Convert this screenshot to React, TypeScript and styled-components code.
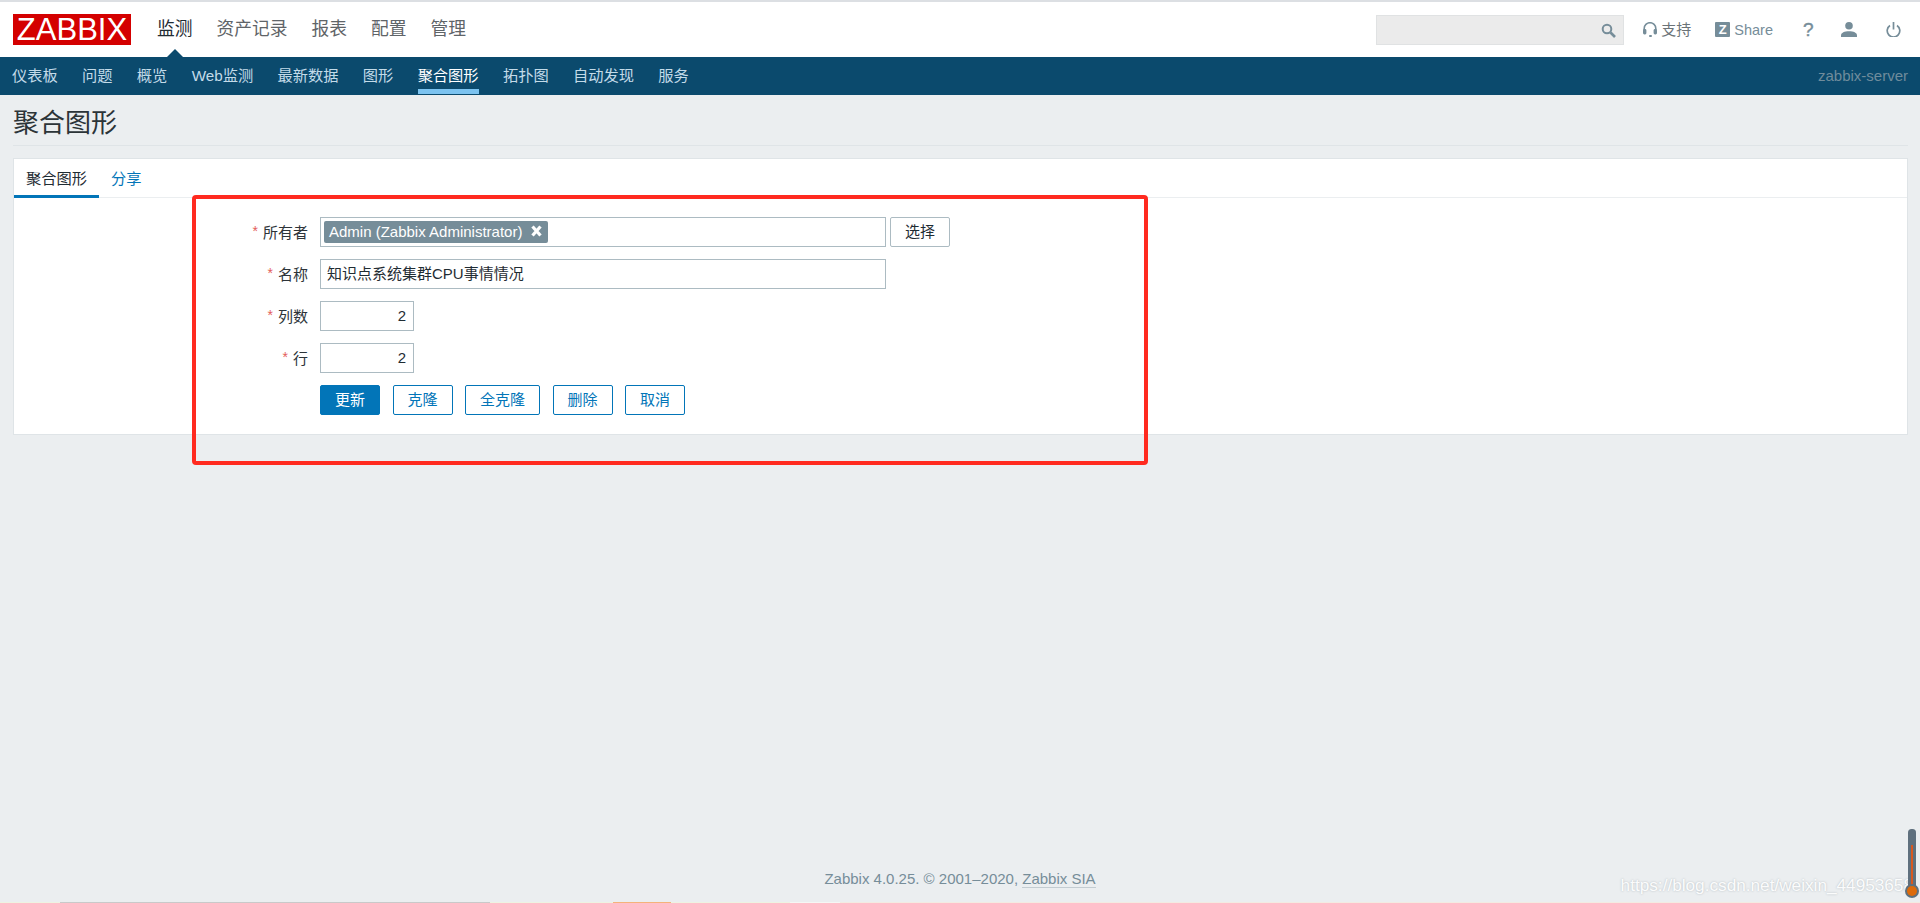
import React from 'react'
import styled, { createGlobalStyle } from 'styled-components'

const FONT = `"Liberation Sans", "Noto Sans CJK SC", sans-serif`

const GlobalStyle = createGlobalStyle`
  html, body {
    margin: 0;
    padding: 0;
    background: #ebeef0;
    font-family: ${FONT};
    overflow: hidden;
  }
  * {
    box-sizing: border-box;
  }
`

const Page = styled.div`
  position: relative;
  height: 903px;
  display: flex;
  flex-direction: column;
  overflow: hidden;
`

const Header = styled.header`
  height: 57px;
  flex: none;
  display: flex;
  align-items: center;
  padding: 0 19px 0 13px;
  background: #fff;
  border-top: 2px solid #dcdfe3;
`

const Logo = styled.div`
  width: 118px;
  height: 31px;
  flex: none;
  background: #d40000;
  color: #fff;
  font-size: 31px;
  line-height: 31px;
  text-align: center;
`

const MainNav = styled.nav`
  display: flex;
  gap: 24px;
  margin-left: 26px;
  margin-top: -1px;
`

const MainLink = styled.a<{ $active?: boolean }>`
  position: relative;
  font-size: 17.75px;
  line-height: 24px;
  color: ${(p) => (p.$active ? '#1f2c33' : '#5f6468')};

  ${(p) =>
    p.$active &&
    `&::after {
      content: '';
      position: absolute;
      left: 50%;
      bottom: -18px;
      margin-left: -10px;
      border-left: 10px solid transparent;
      border-right: 10px solid transparent;
      border-bottom: 10px solid #0b4a6d;
    }`}
`

const HeaderRight = styled.div`
  margin-left: auto;
  display: flex;
  align-items: center;
`

const SearchBox = styled.div`
  position: relative;
  width: 248px;
  height: 30px;
  background: #ebebeb;
  border: 1px solid #e0e2e3;
`

const SearchIconSlot = styled.span`
  position: absolute;
  right: 7px;
  top: 7px;
  display: flex;
`

const HelpLinks = styled.div`
  display: flex;
  align-items: center;
  gap: 24px;
  margin-left: 19px;
`

const HelpLink = styled.a`
  display: flex;
  align-items: center;
  gap: 4px;
  line-height: 18px;
`

const HelpLabel = styled.span<{ $cjk?: boolean }>`
  font-size: ${(p) => (p.$cjk ? '15px' : '14.5px')};
  color: ${(p) => (p.$cjk ? '#6b7378' : '#768d99')};
`

const ZBadge = styled.span`
  width: 15px;
  height: 15px;
  background: #768d99;
  border-radius: 1px;
  color: #fff;
  font-size: 13px;
  font-weight: 700;
  line-height: 15px;
  text-align: center;
`

const IconLinks = styled.div`
  display: flex;
  align-items: center;
  gap: 29px;
  margin-left: 30px;
`

const QuestionMark = styled.a`
  width: 9px;
  font-size: 19px;
  font-weight: 400;
  line-height: 18px;
  color: #768d99;
  -webkit-text-stroke: 0.4px #768d99;
`

const SubNav = styled.nav`
  height: 38px;
  flex: none;
  display: flex;
  gap: 24.3px;
  padding: 0 12px;
  background: #0b4a6d;
`

const SubLink = styled.a<{ $active?: boolean }>`
  height: 37px;
  padding-top: 7px;
  font-size: 15.25px;
  line-height: 24px;
  color: ${(p) => (p.$active ? '#fff' : '#c3dbe9')};
  border-bottom: 5px solid ${(p) => (p.$active ? '#7cc3f0' : 'transparent')};
`

const ServerName = styled.span`
  margin-left: auto;
  padding-top: 7px;
  font-size: 15px;
  line-height: 24px;
  color: #6f8c9c;
`

const Content = styled.main`
  flex: none;
  padding: 0 12px 0 13px;
`

const TitleBar = styled.div`
  height: 51px;
  display: flex;
  align-items: center;
  padding-top: 5px;
  border-bottom: 1px solid #dfe4e7;
`

const Title = styled.h1`
  margin: 0;
  font-size: 26px;
  font-weight: 400;
  line-height: 34px;
  color: #2c3438;
`

const Card = styled.section`
  margin-top: 12px;
  background: #fff;
  border: 1px solid #dfe4e7;
`

const Tabs = styled.div`
  display: flex;
  height: 39px;
  border-bottom: 1px solid #ebeef0;
`

const Tab = styled.a<{ $active?: boolean }>`
  height: 39px;
  padding: 8px 12px 0;
  font-size: 15.25px;
  line-height: 24px;
  color: ${(p) => (p.$active ? '#1f2c33' : '#0275b8')};
  border-bottom: 3px solid ${(p) => (p.$active ? '#0275b8' : 'transparent')};
`

const Form = styled.form`
  display: grid;
  grid-template-columns: 294px 1fr;
  column-gap: 12px;
  row-gap: 12px;
  padding: 19px 0;
`

const FieldLabel = styled.label`
  display: flex;
  justify-content: flex-end;
  align-items: center;
  gap: 5px;
  height: 30px;
  padding-bottom: 2px;
  font-size: 15px;
  color: #2d3439;
`

const Star = styled.span`
  color: #e3605c;
  font-size: 14px;
`

const FieldRow = styled.div`
  display: flex;
  gap: 4px;
`

const Input = styled.div<{ $narrow?: boolean }>`
  width: ${(p) => (p.$narrow ? '94px' : '566px')};
  height: 30px;
  padding: 0 7px 0 6px;
  border: 1px solid #acbbc2;
  font-size: 15px;
  line-height: 28px;
  color: #1f2c33;
  text-align: ${(p) => (p.$narrow ? 'right' : 'left')};
`

const MultiSelect = styled.div`
  width: 566px;
  height: 30px;
  padding: 3px;
  border: 1px solid #acbbc2;
`

const Tag = styled.span`
  display: inline-flex;
  align-items: center;
  gap: 9px;
  width: 224px;
  height: 22px;
  padding-left: 5px;
  background: #768d99;
  border-radius: 2px;
  color: #fff;
  font-size: 15px;
  line-height: 22px;
  white-space: nowrap;
`

const RemoveGlyph = styled.svg`
  margin-top: -3px;
`

const Button = styled.button<{ $variant?: 'primary' | 'outline' | 'plain' }>`
  height: 30px;
  padding: 0 14px;
  border-radius: 2px;
  font-family: ${FONT};
  font-size: 15px;
  line-height: 28px;
  border: 1px solid ${(p) => (p.$variant === 'plain' ? '#acbbc2' : '#0275b8')};
  background: ${(p) => (p.$variant === 'primary' ? '#0275b8' : '#fff')};
  color: ${(p) =>
    p.$variant === 'primary' ? '#fff' : p.$variant === 'plain' ? '#1f2c33' : '#0275b8'};
`

const Actions = styled.div`
  grid-column: 2;
  display: flex;
  gap: 12.5px;
`

const Footer = styled.footer`
  margin-top: auto;
  height: 33px;
  flex: none;
  text-align: center;
  font-size: 15px;
  line-height: 20px;
  color: #768d99;
`

const FooterLink = styled.a`
  border-bottom: 1px solid #c3ccd1;
`

const BottomStrip = styled.div`
  height: 1px;
  flex: none;
  display: flex;
`

const StripPart = styled.span<{ $w: number; $c: string }>`
  flex: ${(p) => (p.$w ? `0 0 ${p.$w}px` : '1')};
  background: ${(p) => p.$c};
`

/* red annotation drawn over the screenshot */
const Annotation = styled.div`
  position: absolute;
  left: 192px;
  top: 195px;
  width: 956px;
  height: 270px;
  border: 4px solid #ff2a1f;
  border-radius: 4px;
  pointer-events: none;
`

const Watermark = styled.span`
  position: absolute;
  right: 7px;
  bottom: 6px;
  font-size: 17.2px;
  line-height: 24px;
  color: rgba(255, 255, 255, 0.95);
  text-shadow: 0 0 2px rgba(170, 178, 184, 0.9);
  white-space: nowrap;
`

const Thermometer = styled.svg`
  position: absolute;
  right: 1px;
  bottom: 5px;
`

const SearchIcon = () => (
  <svg width="15" height="15" viewBox="0 0 15 15" fill="none" stroke="#768d99">
    <circle cx="6" cy="6" r="4.3" strokeWidth="2" />
    <path d="M9.5 9.5L14 14" strokeWidth="2.6" />
  </svg>
)

const HeadsetIcon = () => (
  <svg width="14" height="15" viewBox="0 0 14 15" fill="none">
    <path d="M1.2 9V6.5a5.8 5.8 0 0 1 11.6 0V9" stroke="#768d99" strokeWidth="1.6" />
    <rect x="0" y="7" width="3.4" height="5.5" rx="1.4" fill="#768d99" />
    <rect x="10.6" y="7" width="3.4" height="5.5" rx="1.4" fill="#768d99" />
    <rect x="6" y="13" width="3" height="2" rx="1" fill="#768d99" />
  </svg>
)

const UserIcon = () => (
  <svg width="16" height="15" viewBox="0 0 16 15" fill="#768d99">
    <circle cx="8" cy="3.8" r="3.8" />
    <path d="M0 15v-1.6C0 10.800 3.500 9.300 8 9.300s8 1.500 8 4.100V15z" />
  </svg>
)

const PowerIcon = () => (
  <svg width="15" height="15" viewBox="0 0 15 15" fill="none" stroke="#768d99" strokeWidth="1.7">
    <path d="M4 3.500a6.300 6.300 0 1 0 7 0" />
    <path d="M7.500 0v7.500" />
  </svg>
)

const RemoveIcon = () => (
  <RemoveGlyph width="11" height="12" viewBox="0 0 11 12" stroke="#fff" strokeWidth="3.2">
    <path d="M1.500 1.500l8 9M9.500 1.500l-8 9" />
  </RemoveGlyph>
)

const ThermometerIcon = () => (
  <Thermometer width="14" height="69" viewBox="0 0 14 69">
    <rect x="3" y="0" width="8" height="60" rx="3.500" fill="#5f707e" />
    <rect x="6" y="16" width="2" height="46" fill="#d9581f" />
    <circle cx="7" cy="62" r="7" fill="#5f707e" />
    <circle cx="7" cy="62" r="5" fill="#dd6b0c" />
  </Thermometer>
)

const mainLinks = ['监测', '资产记录', '报表', '配置', '管理']
const subLinks = ['仪表板', '问题', '概览', 'Web监测', '最新数据', '图形', '聚合图形', '拓扑图', '自动发现', '服务']
const actions = ['克隆', '全克隆', '删除', '取消']
const strip: [number, string][] = [
  [60, '#eef3e2'],
  [430, '#c9c9c9'],
  [123, '#eef3e2'],
  [58, '#f5b27a'],
  [119, '#eef3e2'],
  [50, '#f5f7f4'],
  [0, '#f3ebe2'],
]

export default function App() {
  return (
    <Page>
      <GlobalStyle />
      <Header>
        <Logo>ZABBIX</Logo>
        <MainNav>
          {mainLinks.map((item, i) => (
            <MainLink key={item} $active={i === 0}>
              {item}
            </MainLink>
          ))}
        </MainNav>
        <HeaderRight>
          <SearchBox>
            <SearchIconSlot>
              <SearchIcon />
            </SearchIconSlot>
          </SearchBox>
          <HelpLinks>
            <HelpLink>
              <HeadsetIcon />
              <HelpLabel $cjk>支持</HelpLabel>
            </HelpLink>
            <HelpLink>
              <ZBadge>Z</ZBadge>
              <HelpLabel>Share</HelpLabel>
            </HelpLink>
          </HelpLinks>
          <IconLinks>
            <QuestionMark>?</QuestionMark>
            <UserIcon />
            <PowerIcon />
          </IconLinks>
        </HeaderRight>
      </Header>
      <SubNav>
        {subLinks.map((item) => (
          <SubLink key={item} $active={item === '聚合图形'}>
            {item}
          </SubLink>
        ))}
        <ServerName>zabbix-server</ServerName>
      </SubNav>
      <Content>
        <TitleBar>
          <Title>聚合图形</Title>
        </TitleBar>
        <Card>
          <Tabs>
            <Tab $active>聚合图形</Tab>
            <Tab>分享</Tab>
          </Tabs>
          <Form>
            <FieldLabel>
              <Star>*</Star>所有者
            </FieldLabel>
            <FieldRow>
              <MultiSelect>
                <Tag>
                  Admin (Zabbix Administrator)
                  <RemoveIcon />
                </Tag>
              </MultiSelect>
              <Button type="button" $variant="plain">
                选择
              </Button>
            </FieldRow>
            <FieldLabel>
              <Star>*</Star>名称
            </FieldLabel>
            <Input>知识点系统集群CPU事情情况</Input>
            <FieldLabel>
              <Star>*</Star>列数
            </FieldLabel>
            <Input $narrow>2</Input>
            <FieldLabel>
              <Star>*</Star>行
            </FieldLabel>
            <Input $narrow>2</Input>
            <Actions>
              <Button type="button" $variant="primary">
                更新
              </Button>
              {actions.map((item) => (
                <Button key={item} type="button" $variant="outline">
                  {item}
                </Button>
              ))}
            </Actions>
          </Form>
        </Card>
      </Content>
      <Footer>
        Zabbix 4.0.25. © 2001–2020, <FooterLink>Zabbix SIA</FooterLink>
      </Footer>
      <BottomStrip>
        {strip.map(([w, c], i) => (
          <StripPart key={i} $w={w} $c={c} />
        ))}
      </BottomStrip>
      <Annotation />
      <Watermark>https://blog.csdn.net/weixin_44953658</Watermark>
      <ThermometerIcon />
    </Page>
  )
}
